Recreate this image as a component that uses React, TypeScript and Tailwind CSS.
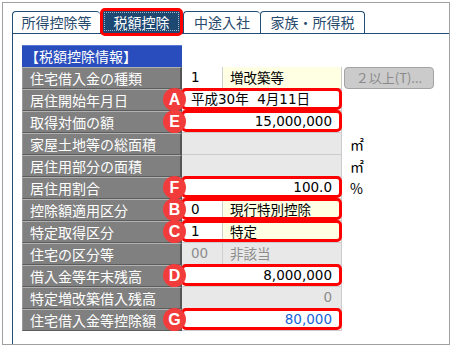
import type { ReactNode } from 'react';

const jp = { fontFamily: '"Noto Sans CJK JP", sans-serif' };
const val = { fontFamily: '"DejaVu Sans", "Noto Sans CJK JP", sans-serif' };

type Row = {
  label: string;
  badge?: string;
  kind: 'code' | 'text' | 'num' | 'off' | 'offcode' | 'offnum';
  code?: string;
  name?: string;
  value?: string;
  unit?: string;
  blue?: boolean;
  button?: boolean;
};

const rows: Row[] = [
  { label: '住宅借入金の種類', kind: 'code', code: '1', name: '増改築等', button: true },
  { label: '居住開始年月日', badge: 'A', kind: 'text', value: '平成30年\u00a0\u00a04月11日' },
  { label: '取得対価の額', badge: 'E', kind: 'num', value: '15,000,000' },
  { label: '家屋土地等の総面積', kind: 'off', unit: '㎡' },
  { label: '居住用部分の面積', kind: 'off', unit: '㎡' },
  { label: '居住用割合', badge: 'F', kind: 'num', value: '100.0', unit: '%' },
  { label: '控除額適用区分', badge: 'B', kind: 'code', code: '0', name: '現行特別控除' },
  { label: '特定取得区分', badge: 'C', kind: 'code', code: '1', name: '特定' },
  { label: '住宅の区分等', kind: 'offcode', code: '00', name: '非該当' },
  { label: '借入金等年末残高', badge: 'D', kind: 'num', value: '8,000,000' },
  { label: '特定増改築借入残高', kind: 'offnum', value: '0' },
  { label: '住宅借入金等控除額', badge: 'G', kind: 'num', value: '80,000', blue: true },
];

const tabs = [
  { label: '所得控除等', w: 'w-[88px]' },
  { label: '税額控除', w: 'w-[83px]', active: true },
  { label: '中途入社', w: 'w-[77px]' },
  { label: '家族・所得税', w: 'w-[105px]', last: true },
];

function ValueCell({ row }: { row: Row }) {
  let body: ReactNode = null;
  if (row.kind === 'code' || row.kind === 'offcode') {
    const off = row.kind === 'offcode';
    body = (
      <div className="flex h-full">
        <div
          className={`w-[41px] h-full pl-[9px] flex items-center border-r border-[#cfcfcf] ${
            off ? 'bg-[#e8e8e8] text-[#8c8c8c]' : 'bg-white text-black'
          }`}
        >
          {row.code}
        </div>
        <div
          className={`flex-1 h-full pl-[7px] flex items-center ${
            off ? 'bg-[#e8e8e8] text-[#8c8c8c]' : 'bg-[#ffffe3] text-black'
          }`}
          style={jp}
        >
          {row.name}
        </div>
      </div>
    );
  } else if (row.kind === 'text') {
    body = <div className="h-full bg-white pl-[9px] flex items-center text-black">{row.value}</div>;
  } else if (row.kind === 'num') {
    body = (
      <div
        className={`h-full bg-white pr-[9px] flex items-center justify-end ${
          row.blue ? 'text-[#1762d6]' : 'text-black'
        }`}
      >
        {row.value}
      </div>
    );
  } else if (row.kind === 'offnum') {
    body = (
      <div className="h-full bg-[#e8e8e8] pr-[9px] flex items-center justify-end text-[#8c8c8c]">
        {row.value}
      </div>
    );
  } else {
    body = <div className="h-full bg-[#e8e8e8]" />;
  }

  return (
    <div className="relative w-[160px] h-full border-b border-r border-[#cccccc]">
      {body}
      {row.badge && (
        <>
          <div className="absolute -top-px bottom-0 -left-px right-[-1px] border-[3px] border-[#ff0000] rounded-[5px] pointer-events-none" />
          <div
            className="absolute left-[-19px] top-[-1px] w-[23px] h-[23px] rounded-full bg-[#f23c3c] text-white text-[16px] font-bold flex items-center justify-center z-10"
            style={{ fontFamily: '"Liberation Sans", Arial, sans-serif' }}
          >
            {row.badge}
          </div>
        </>
      )}
    </div>
  );
}

export default function App() {
  return (
    <div className="w-[452px] h-[347px] bg-white p-[2px]">
      <div className="w-full h-full border border-[#a0a0a0] pl-[9px] pt-[8px] flex flex-col">
        <div className="flex items-end h-[23px] border-b border-[#1f4e79]" style={jp}>
          {tabs.map((t) =>
            t.active ? (
              <div key={t.label} className={`relative ${t.w} h-[22px] bg-[#1d4872] text-white text-[14px] flex items-center justify-center rounded-t-[4px]`}>
                <div className="absolute inset-x-[4px] top-[1px] bottom-[2px] border border-dotted border-[#a9b8c8]" />
                <span className="relative">{t.label}</span>
                <div className="absolute -top-[3px] -bottom-[3px] left-0 right-0 border-[3px] border-[#ff0000] rounded-[5px]" />
              </div>
            ) : (
              <div
                key={t.label}
                className={`${t.w} h-[22px] border-t border-l ${t.last ? 'border-r' : ''} border-[#1f4e79] rounded-t-[4px] text-[#284a6c] text-[14px] flex items-center justify-center`}
              >
                {t.label}
              </div>
            ),
          )}
        </div>
        <div className="flex-1 border-l border-[#1f4e79] pl-[9px] pt-[11px] text-[13.5px]" style={val}>
          <div className="w-[160px] h-[22px] bg-[#2a4dbd] border-t border-[#5a78d6] text-white text-[14px] pl-[3px] flex items-center" style={jp}>
            【税額控除情報】
          </div>
          {rows.map((r) => (
            <div key={r.label} className="flex h-[22px]">
              <div
                className="w-[160px] h-full bg-[#808080] border-t border-t-[#b2b2b2] border-b border-b-[#5c5c5c] border-l border-l-[#9a9a9a] border-r-2 border-r-[#555555] text-white text-[14px] pl-[7px] flex items-center"
                style={jp}
              >
                {r.label}
              </div>
              <ValueCell row={r} />
              {r.unit && (
                <div className="pl-[8px] flex items-center text-black text-[14px]" style={jp}>
                  {r.unit}
                </div>
              )}
              {r.button && (
                <div className="ml-[2px] w-[90px] h-[22px] rounded-[4px] border border-[#a3a3a3] bg-[#cbcbcb] text-[#8a8a8a] text-[13px] flex items-center justify-center" style={jp}>
                  ２以上(T)...
                </div>
              )}
            </div>
          ))}
        </div>
      </div>
    </div>
  );
}
